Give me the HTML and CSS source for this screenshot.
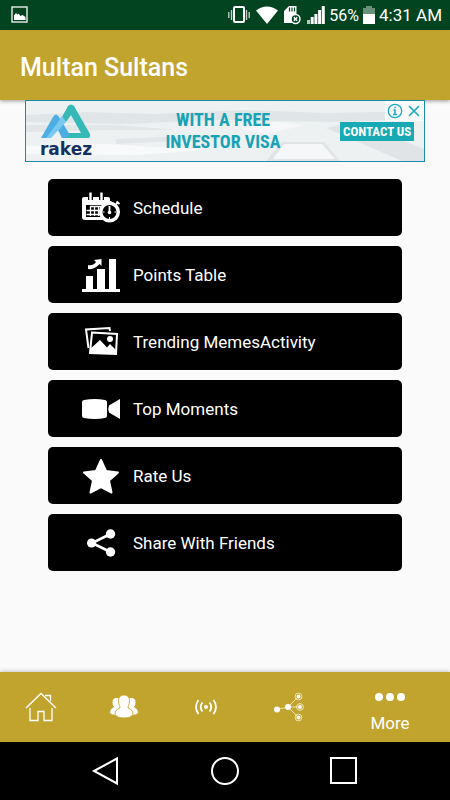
FILE: index.html
```
<!DOCTYPE html>
<html lang="en">
<head>
    <meta charset="UTF-8">
    <meta name="viewport" content="width=device-width, initial-scale=1.0">
    <title>Multan Sultans</title>
    <link rel="stylesheet" href="styles.css">
</head>
<body>
    <!-- Status bar -->
    <div class="status-bar">
        <svg width="18" height="18" viewBox="0 0 18 18">
            <rect x="1" y="1" width="15" height="15" fill="none" stroke="#e8eee9" stroke-width="1.4"/>
            <path d="M3 14V9.500l2-2.500 1.500 1.500 1-1 2 2.500 2-1 3 2V14z" fill="#fff"/>
        </svg>
        <div class="status-info">
            <svg width="22" height="20" viewBox="0 0 22 20">
                <rect x="6" y="2" width="10" height="15" rx="1" fill="none" stroke="#fff" stroke-width="2"/>
                <path d="M3.500 5v10M18.500 5v10M.8 7v6M21.200 7v6" stroke="#c5d3ca" stroke-width="1.300"/>
            </svg>
            <svg width="22" height="20" viewBox="0 0 22 20">
                <path d="M0 5.500Q11-2.500 22 5.500L11 19z" fill="#fff"/>
            </svg>
            <svg width="17" height="20" viewBox="0 0 17 20">
                <path d="M0 18V6l5-5h7.500v17z" fill="#fff"/>
                <path d="M5.500 2.500v4M8 2.500v4M10.500 2.500v4" stroke="#02441f" stroke-width="1.200"/>
                <circle cx="11.500" cy="14" r="4.500" fill="#02441f" stroke="#fff" stroke-width="1.500"/>
                <path d="M9.800 12.300l3.400 3.400M13.200 12.300l-3.400 3.400" stroke="#fff" stroke-width="1.500"/>
            </svg>
            <svg width="18" height="20" viewBox="0 0 18 20">
                <path d="M0 15h3v4H0z" fill="#b9c9bf"/>
                <path d="M3.700 12h3v7h-3zM7.400 9h3v10h-3zM11.100 5h3v14h-3zM14.800 1h3v18h-3z" fill="#fff"/>
            </svg>
            <span class="battery-level">56%</span>
            <svg width="12" height="20" viewBox="0 0 12 20">
                <path d="M0 3h3V1h6v2h3v7H0z" fill="#6a9079"/>
                <path d="M0 9h12v10H0z" fill="#fff"/>
            </svg>
            <time class="clock">4:31 AM</time>
        </div>
    </div>

    <header class="app-header">
        <h1>Multan Sultans</h1>
    </header>

    <main>
        <!-- Ad banner -->
        <div class="ad">
            <svg class="ad-scene" viewBox="0 0 398 60" preserveAspectRatio="none">
                <rect width="398" height="60" fill="#eef1f2"/>
                <path d="M0 14l60-3 70 2 90-4 80 3 98-2v8l-90 3-120-2-90 4-98-2z" fill="#e0e5e8"/>
                <path d="M0 24h90l60 5h-70l-80 2zM90 38l100-4 20 3-120 6z" fill="#e3e6e8"/>
                <path d="M240 60l16-19h42l16 19zM300 27l30-7 68 28v12h-22z" fill="#e1e4e6"/>
                <path d="M258 43h38l13 15h-62zM215 28l36-7 28 3-38 9z" fill="#f6f7f8"/>
                <path d="M0 45l80-2 100 6-70 5-110-1z" fill="#f8f9fa"/>
            </svg>
            <div class="ad-brand">
                <svg width="50" height="35" viewBox="0 0 50 35">
                    <path d="M20 34L26 29H40L30 11 25 18 21 13 27 2Q30-1 33 2L49 30Q50 34 46 34z" fill="#35b9b7"/>
                    <path d="M0 34L12 13Q15 8 18 13L29 31 24 34H21L15 22 8 34z" fill="#4daee3"/>
                    <path d="M15 21L21 12 25 18 10 34H5z" fill="#79caf0"/>
                </svg>
                <span class="ad-name">rakez</span>
            </div>
            <p class="ad-text">WITH A FREE<br>INVESTOR VISA</p>
            <a class="ad-link" href="#contact">CONTACT US</a>
            <div class="ad-choices">
                <button type="button" aria-label="Ad info">
                    <svg width="16" height="16" viewBox="0 0 16 16" fill="none" stroke="#19a9c5">
                        <circle cx="8" cy="8" r="6.700" stroke-width="1.300"/>
                        <path d="M6.500 7H8v4.500M6 11.500h4M7.200 4.500h1.600" stroke-width="1.500"/>
                    </svg>
                </button>
                <button type="button" aria-label="Close ad">
                    <svg width="16" height="16" viewBox="0 0 16 16">
                        <path d="M3 3l10 10M13 3L3 13" stroke="#19a9c5" stroke-width="1.600"/>
                    </svg>
                </button>
            </div>
        </div>

        <!-- Menu -->
        <div class="menu">
            <button class="menu-item" type="button">
                <svg width="40" height="40" viewBox="0 0 40 40">
                    <path d="M3 9h24q2 0 2 2v18q0 3-3 3H4q-3 0-3-3V11q0-2 2-2z" fill="#fff"/>
                    <path d="M9.500 5v7M20.500 5v7" stroke="#000" stroke-width="5"/>
                    <path d="M9.500 4.500v8M20.500 4.500v8" stroke="#fff" stroke-width="2.400"/>
                    <path d="M5 17h17v12H5z" fill="#000"/>
                    <path d="M9 18.500h12M5.500 22.500h14M5.500 26.500h14M9.500 18v10M13.500 18v10M17.500 18v10" stroke="#fff" stroke-width="1.300"/>
                    <circle cx="28.500" cy="24" r="10.500" fill="#fff"/>
                    <circle cx="28.500" cy="24" r="7" fill="#000"/>
                    <path d="M28.500 18v6M26.500 14h4M35 16l2.500-2M35.500 13.500l3 2.500" stroke="#fff" stroke-width="1.800"/>
                    <circle cx="28.500" cy="24.500" r="1.800" fill="#fff"/>
                    <path d="M22 24h1.500M33.500 24H35M28.500 29v2" stroke="#fff" stroke-width="1"/>
                </svg>
                Schedule
            </button>
            <button class="menu-item" type="button">
                <svg width="40" height="40" viewBox="0 0 40 40" fill="#fff">
                    <path d="M1 34h4V21h7v13h4V14h8v20h4V4h7v30h4v3H1z"/>
                    <path d="M7 10q5 1 8-3l-2-2 7.500-1v7l-2-2q-5 6-11.500 5z"/>
                </svg>
                Points Table
            </button>
            <button class="menu-item" type="button">
                <svg width="40" height="40" viewBox="0 0 40 40">
                    <path d="M7.500 26L5 7.500 28.500 6l.5 3" fill="none" stroke="#fff" stroke-width="2"/>
                    <path d="M11 10.500L36 12l-1 20-26-1z" fill="#000" stroke="#fff" stroke-width="2"/>
                    <path d="M9 27l10-9 7 7.500 3-3.500 6 6v4L9 31z" fill="#fff"/>
                    <circle cx="29" cy="17" r="3" fill="#fff"/>
                </svg>
                Trending MemesActivity
            </button>
            <button class="menu-item" type="button">
                <svg width="40" height="40" viewBox="0 0 40 40" fill="#fff">
                    <path d="M1 13q0-1.500 2-2 11-2 21 0 2 .5 2 2v14q0 1.500-2 2-10 2-21 0-2-.5-2-2z"/>
                    <path d="M39 10v20L28 23.500q-1.500-3.500 0-7z"/>
                </svg>
                Top Moments
            </button>
            <button class="menu-item" type="button">
                <svg width="40" height="40" viewBox="0 0 40 40">
                    <path d="M20 4l5 11 12 1.500-9 8 2.500 12L20 31 9.500 36.500 12 24.500 3 16.500 15 15z" fill="#fff" stroke="#fff" stroke-width="2" stroke-linejoin="round"/>
                </svg>
                Rate Us
            </button>
            <button class="menu-item" type="button">
                <svg width="40" height="40" viewBox="0 0 40 40" fill="#fff">
                    <path d="M29.500 11L11 20l18.500 9" fill="none" stroke="#fff" stroke-width="2.600"/>
                    <circle cx="10.500" cy="20" r="4.500"/>
                    <circle cx="29.500" cy="11" r="4.700"/>
                    <circle cx="29.500" cy="29" r="4.700"/>
                </svg>
                Share With Friends
            </button>
        </div>
    </main>

    <!-- Tabs -->
    <nav class="tab-bar">
        <a href="#home" aria-label="Home">
            <svg width="32" height="32" viewBox="0 0 32 32" fill="none" stroke="#fff" stroke-width="1.300">
                <path d="M1 17L16 2.500 31 17M20 4.500h5.500V10"/>
                <path d="M5 17v12.500h8v-9h6v9h8V17"/>
            </svg>
        </a>
        <a href="#team" aria-label="Team">
            <svg width="32" height="32" viewBox="0 0 32 32" fill="#fff">
                <path d="M9 7q-5 0-4.500 5 0 2 1.500 4-4 2-4 6 2 2 6 2h16q4 0 6-2 0-4-4-6 1.500-2 1.500-4Q28 7 23 7z"/>
                <path d="M16 4c4 0 6 3 5.500 7-.3 3-1.500 4-1.500 6 3 1 5 3 5 6.500Q23 27 16 27T7 23.500c0-3.500 2-5.500 5-6.500 0-2-1.200-3-1.500-6-.5-4 1.500-7 5.500-7z" stroke="#c1a42e" stroke-width=".9"/>
            </svg>
        </a>
        <a href="#live" aria-label="Live">
            <svg width="32" height="32" viewBox="0 0 32 32" fill="none" stroke="#fff" stroke-width="1.800">
                <circle cx="16" cy="16" r="2" fill="#fff" stroke="none"/>
                <path d="M12.500 11.500q-3.500 4.500 0 9M19.500 11.500q3.500 4.500 0 9M8.500 9q-5 7 0 14M23.500 9q5 7 0 14"/>
            </svg>
        </a>
        <a href="#network" aria-label="Network">
            <svg width="32" height="32" viewBox="0 0 32 32">
                <path d="M4 18.500L15 16 25.500 5.500M15 16h12M15 16l10.500 10.500" fill="none" stroke="#eee3b8"/>
                <g fill="#fff">
                    <circle cx="4" cy="18.500" r="3"/>
                    <circle cx="15" cy="16" r="3"/>
                    <circle cx="25.500" cy="5.500" r="2"/>
                    <circle cx="27" cy="16" r="2"/>
                    <circle cx="25.500" cy="26.500" r="2"/>
                </g>
                <g fill="none" stroke="#eee3b8" stroke-width="1">
                    <circle cx="25.500" cy="5.500" r="3.400"/>
                    <circle cx="27" cy="16" r="3.400"/>
                    <circle cx="25.500" cy="26.500" r="3.400"/>
                </g>
            </svg>
        </a>
        <a class="tab-more" href="#more">
            <svg width="32" height="8" viewBox="0 0 32 8" fill="#fff">
                <circle cx="5" cy="4" r="4"/>
                <circle cx="16" cy="4" r="4"/>
                <circle cx="27" cy="4" r="4"/>
            </svg>
            More
        </a>
    </nav>

    <!-- Android navigation -->
    <div class="system-nav">
        <button type="button" aria-label="Back">
            <svg width="30" height="30" viewBox="0 0 30 30" fill="none" stroke="#fff" stroke-width="2">
                <path d="M3 15L26 2.500v25z"/>
            </svg>
        </button>
        <button type="button" aria-label="Home screen">
            <svg width="30" height="30" viewBox="0 0 30 30" fill="none" stroke="#fff" stroke-width="2">
                <circle cx="15" cy="15" r="13"/>
            </svg>
        </button>
        <button type="button" aria-label="Recent apps">
            <svg width="30" height="30" viewBox="0 0 30 30" fill="none" stroke="#fff" stroke-width="2">
                <rect x="2" y="2" width="25" height="25"/>
            </svg>
        </button>
    </div>
</body>
</html>
```

FILE: styles.css
```
/* Reset and basic styles */
* {
    margin: 0;
    padding: 0;
    box-sizing: border-box;
}

body {
    font-family: Roboto, sans-serif;
    background-color: #fafafa;
    min-height: 100vh;
    display: flex;
    flex-direction: column;
}

svg {
    display: block;
    flex: none;
}

button {
    font: inherit;
    border: 0;
    background: none;
}

/* Status bar */
.status-bar {
    height: 30px;
    padding: 0 8px 0 11px;
    display: flex;
    align-items: center;
    justify-content: space-between;
    background-color: #02441f;
    color: #fff;
}

.status-info {
    display: flex;
    align-items: center;
    gap: 4px;
}

.status-info svg + svg {
    margin-left: 2px;
}

.battery-level {
    font-size: 16px;
}

.clock {
    font-size: 17px;
}

/* Header */
.app-header {
    height: 70px;
    padding: 4px 20px 0;
    display: flex;
    align-items: center;
    background-color: #c1a42e;
    color: #fff;
    box-shadow: 0 1px 4px rgba(0, 0, 0, 0.4);
}

.app-header h1 {
    font-size: 25px;
    font-weight: 500;
}

main {
    flex: 1;
}

/* Ad banner */
.ad {
    position: relative;
    height: 62px;
    margin: 0 25px;
    display: grid;
    grid-template-columns: 80px 1fr 84px;
    align-items: center;
    border: 1px solid #1d8aa8;
    overflow: hidden;
}

.ad-scene {
    position: absolute;
    width: 100%;
    height: 100%;
}

.ad-brand,
.ad-text,
.ad-link {
    position: relative;
}

.ad-brand {
    display: flex;
    flex-direction: column;
    align-items: center;
}

.ad-name {
    color: #152f60;
    font-family: "DejaVu Sans", sans-serif;
    font-size: 17px;
    font-weight: bold;
    line-height: 20px;
}

.ad-text {
    color: #17a3b5;
    font-family: "Roboto Condensed", "Liberation Sans Narrow", Roboto, sans-serif;
    font-size: 18px;
    font-weight: bold;
    line-height: 22px;
    text-align: center;
}

.ad-link {
    justify-self: start;
    padding: 0 3px;
    background-color: #17a9b4;
    color: #fff;
    font-family: "Roboto Condensed", "Liberation Sans Narrow", Roboto, sans-serif;
    font-size: 13px;
    font-weight: bold;
    line-height: 19px;
    text-decoration: none;
    white-space: nowrap;
}

.ad-choices {
    position: absolute;
    top: 0;
    right: 0;
    padding: 2px;
    display: flex;
    gap: 3px;
    background-color: #fafafa;
}

/* Menu */
.menu {
    padding: 17px 48px 20px;
    display: flex;
    flex-direction: column;
    gap: 10px;
}

.menu-item {
    height: 57px;
    padding-left: 33px;
    display: flex;
    align-items: center;
    gap: 12px;
    border-radius: 5px;
    background-color: #000;
    color: #fff;
    font-size: 17px;
}

/* Tabs */
.tab-bar {
    height: 70px;
    display: grid;
    grid-template-columns: repeat(4, 11fr) 16fr;
    align-items: center;
    justify-items: center;
    background-color: #c1a42e;
    box-shadow: 0 -1px 4px rgba(0, 0, 0, 0.2);
}

.tab-more {
    padding-top: 12px;
    display: flex;
    flex-direction: column;
    align-items: center;
    gap: 12px;
    color: #fff;
    font-size: 17px;
    line-height: 20px;
    text-decoration: none;
}

/* Android navigation */
.system-nav {
    height: 58px;
    padding: 0 46px;
    display: grid;
    grid-template-columns: repeat(3, 1fr);
    align-items: center;
    justify-items: center;
    background-color: #000;
}
```
